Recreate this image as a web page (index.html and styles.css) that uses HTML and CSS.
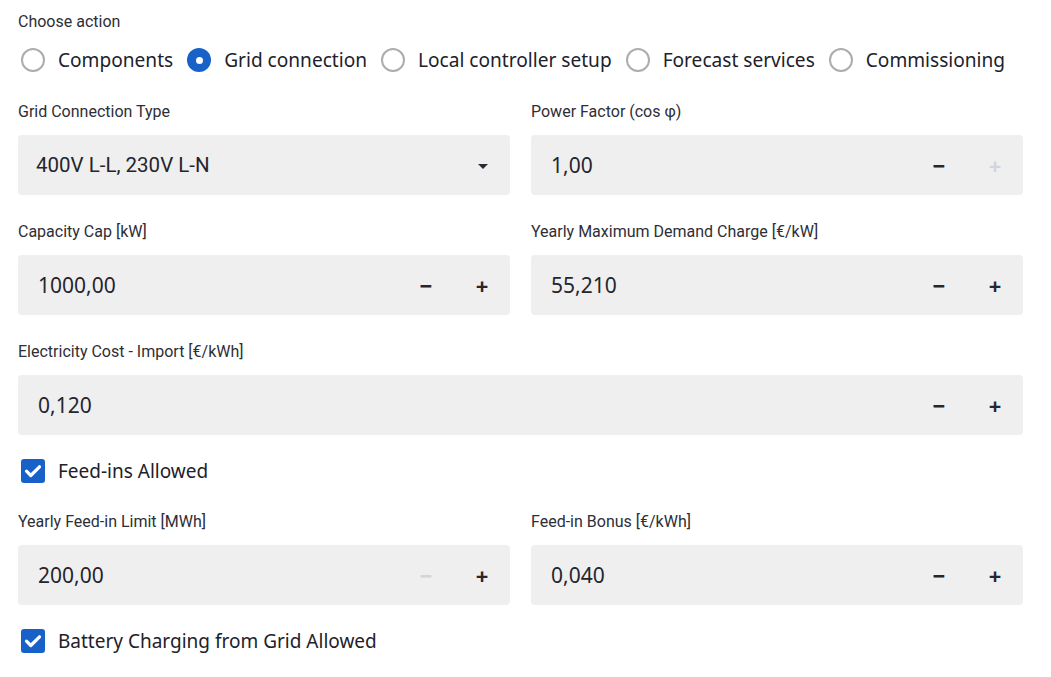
FILE: index.html
```html
<!DOCTYPE html>
<html>
<head>
<meta charset="utf-8">
<link rel="stylesheet" href="styles.css">
</head>
<body>
<div class="page">
  <div class="label top-label">Choose action</div>
  <div class="radios">
    <label class="radio"><span class="circle"></span><span class="rtext">Components</span></label>
    <label class="radio"><span class="circle checked"></span><span class="rtext">Grid connection</span></label>
    <label class="radio"><span class="circle"></span><span class="rtext">Local controller setup</span></label>
    <label class="radio"><span class="circle"></span><span class="rtext">Forecast services</span></label>
    <label class="radio"><span class="circle"></span><span class="rtext">Commissioning</span></label>
  </div>

  <div class="grid">
    <div class="field">
      <div class="label">Grid Connection Type</div>
      <div class="box select">
        <span class="select-text">400V L-L, 230V L-N</span>
        <svg class="caret" width="10" height="5" viewBox="0 0 10 5"><path d="M0 0h10L5 5z" fill="#2a2a35"/></svg>
      </div>
    </div>
    <div class="field">
      <div class="label">Power Factor (cos φ)</div>
      <div class="box number">
        <span class="value">1,00</span>
        <span class="btn">−</span><span class="btn disabled">+</span>
      </div>
    </div>

    <div class="field">
      <div class="label">Capacity Cap [kW]</div>
      <div class="box number">
        <span class="value">1000,00</span>
        <span class="btn">−</span><span class="btn">+</span>
      </div>
    </div>
    <div class="field">
      <div class="label">Yearly Maximum Demand Charge [€/kW]</div>
      <div class="box number">
        <span class="value">55,210</span>
        <span class="btn">−</span><span class="btn">+</span>
      </div>
    </div>

    <div class="field wide">
      <div class="label">Electricity Cost - Import [€/kWh]</div>
      <div class="box number">
        <span class="value">0,120</span>
        <span class="btn">−</span><span class="btn">+</span>
      </div>
    </div>

    <label class="check wide"><span class="cbox"><svg width="18" height="14" viewBox="0 0 18 14"><path d="M2.5 7.2l4.3 4.3L15.5 2.8" fill="none" stroke="#fff" stroke-width="3.2" stroke-linecap="round" stroke-linejoin="round"/></svg></span><span class="ctext">Feed-ins Allowed</span></label>

    <div class="field">
      <div class="label">Yearly Feed-in Limit [MWh]</div>
      <div class="box number">
        <span class="value">200,00</span>
        <span class="btn disabled">−</span><span class="btn">+</span>
      </div>
    </div>
    <div class="field">
      <div class="label">Feed-in Bonus [€/kWh]</div>
      <div class="box number">
        <span class="value">0,040</span>
        <span class="btn">−</span><span class="btn">+</span>
      </div>
    </div>

    <label class="check wide"><span class="cbox"><svg width="18" height="14" viewBox="0 0 18 14"><path d="M2.5 7.2l4.3 4.3L15.5 2.8" fill="none" stroke="#fff" stroke-width="3.2" stroke-linecap="round" stroke-linejoin="round"/></svg></span><span class="ctext">Battery Charging from Grid Allowed</span></label>
  </div>
</div>
</body>
</html>
```

FILE: styles.css
```css
* { box-sizing: border-box; }
html, body { margin: 0; padding: 0; background: #fff; }
body {
  font-family: "Noto Sans", "Open Sans", sans-serif;
  color: #21212b;
}
.page {
  width: 1004px;
  margin-left: 18px;
  padding-top: 11px;
}
.label {
  font-family: Roboto, "Liberation Sans", sans-serif;
  font-size: 16px;
  line-height: 20px;
  color: #2e2e36;
  white-space: nowrap;
}
.top-label { padding-top: 1px; }
.radios {
  display: flex;
  align-items: center;
  gap: 14px;
  margin-top: 15px;
  margin-left: 3px;
  height: 26px;
}
.radio {
  display: flex;
  align-items: center;
  gap: 13px;
}
.circle {
  width: 24px;
  height: 24px;
  border-radius: 50%;
  border: 2.5px solid #adadad;
  flex: none;
}
.circle.checked {
  border: none;
  background: #1761c9;
  position: relative;
}
.circle.checked::after {
  content: "";
  position: absolute;
  left: 8.5px;
  top: 8.5px;
  width: 7px;
  height: 7px;
  border-radius: 50%;
  background: #fff;
}
.rtext {
  font-size: 19.1px;
  line-height: 26px;
  white-space: nowrap;
}
.grid {
  display: grid;
  grid-template-columns: 492px 492px;
  column-gap: 21px;
  row-gap: 26px;
  margin-top: 28px;
}
.field { display: flex; flex-direction: column; gap: 13px; }
.field .label { padding-top: 1px; }
.wide { grid-column: 1 / 3; }
.box {
  height: 60px;
  background: #efefef;
  border-radius: 4px;
  display: flex;
  align-items: center;
}
.select { padding: 0 22px 0 18px; justify-content: space-between; }
.select-text {
  font-family: Roboto, "Liberation Sans", sans-serif;
  font-size: 20.5px;
  color: #25252d;
}
.caret { margin-top: 2px; }
.number { padding-left: 20px; }
.value {
  flex: 1;
  font-size: 21px;
  color: #25252d;
}
.btn {
  width: 56px;
  text-align: center;
  font-size: 22px;
  font-weight: 700;
  color: #26262e;
  line-height: 1;
}
.btn.disabled { color: #d3d5dc; }
.check {
  display: flex;
  align-items: center;
  gap: 13px;
  margin-left: 3px;
  margin-top: -3px;
  margin-bottom: 1px;
  height: 26px;
}
.cbox {
  width: 24px;
  height: 24px;
  border-radius: 3px;
  background: #1761c9;
  display: flex;
  align-items: center;
  justify-content: center;
  flex: none;
}
.ctext {
  font-size: 19px;
  line-height: 26px;
  white-space: nowrap;
}
```
